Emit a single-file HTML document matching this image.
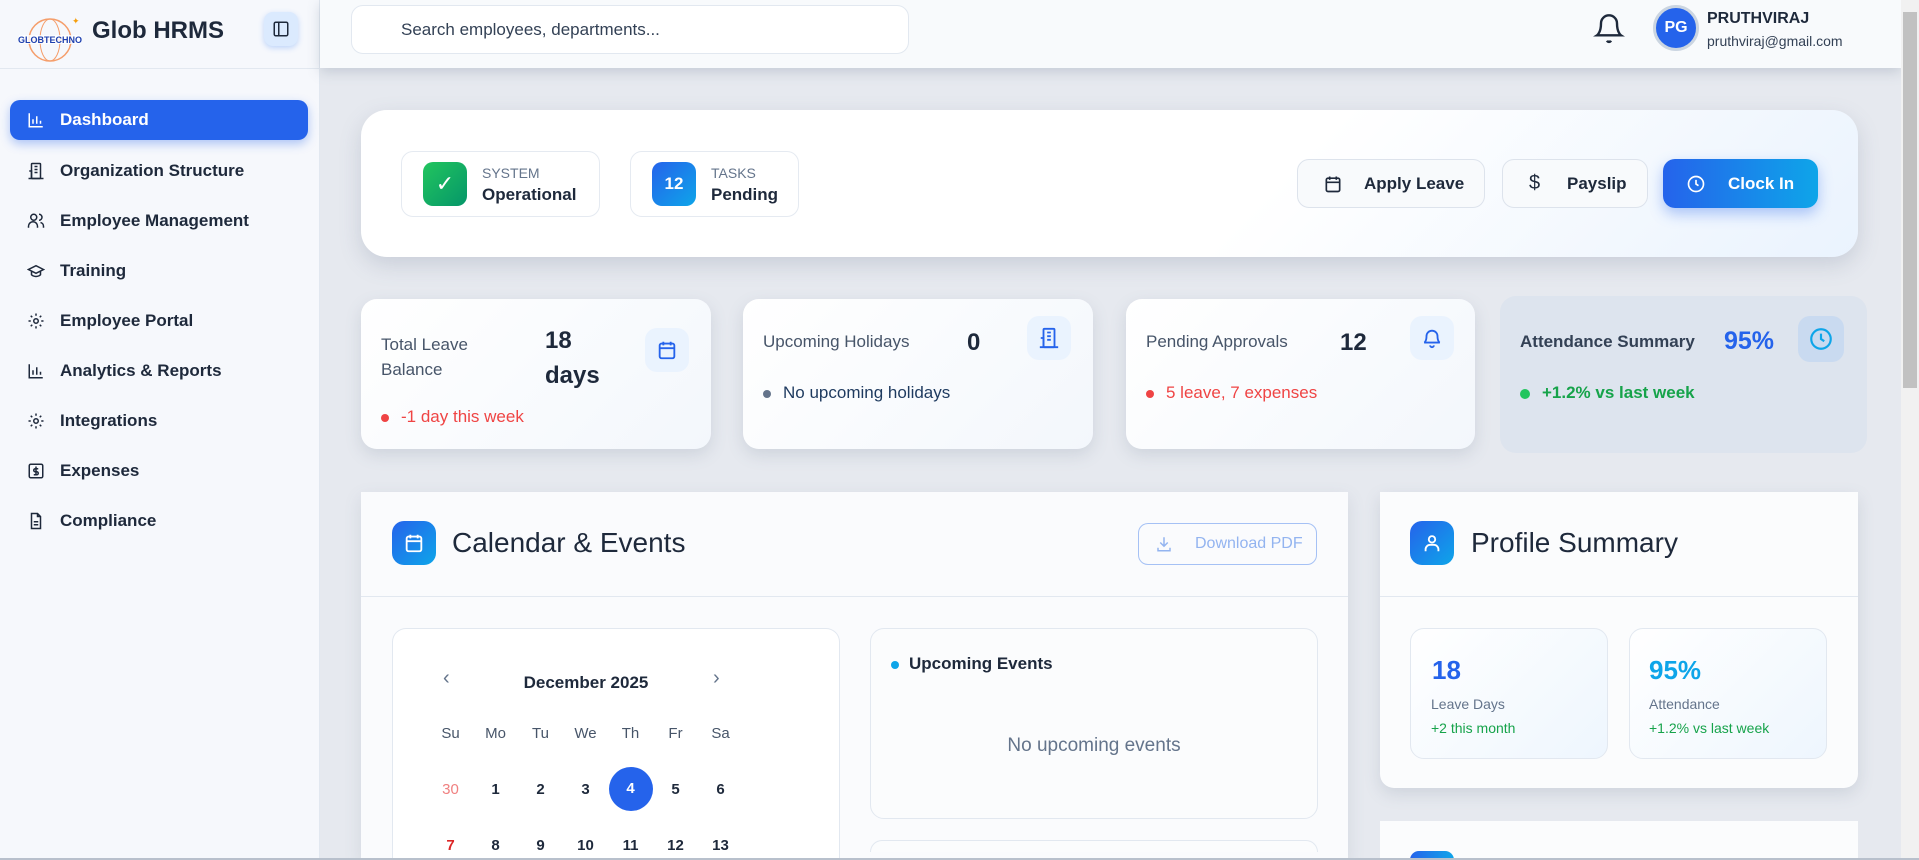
<!DOCTYPE html>
<html><head><meta charset="utf-8">
<style>
*{box-sizing:border-box;margin:0;padding:0}
html,body{width:1919px;height:860px;overflow:hidden}
body{font-family:"Liberation Sans",sans-serif;background:#e6e9ef;color:#1e293b}
#w{position:relative;width:1919px;height:860px;overflow:hidden;background:#e6e9ef}
.a{position:absolute}
.side{left:0;top:0;width:320px;height:860px;background:#f6f8fc;border-right:1px solid #e2e8f0}
.nav{position:absolute;left:10px;width:298px;height:40px;display:flex;align-items:center;font-size:17px;color:#1e293b;font-weight:600}
.nav svg{position:absolute;left:17px}
.nav span{position:absolute;left:50px}
.hdr{left:320px;top:0;width:1581px;height:68px;background:#f8fafc;box-shadow:0 4px 12px rgba(100,116,139,.25)}
.card{background:linear-gradient(135deg,#fff,#f3f7fc);border-radius:16px;box-shadow:0 6px 16px rgba(100,116,139,.18)}
.btn{position:absolute;top:159px;height:49px;border:1px solid #dde3ec;border-radius:12px;background:#f8fafc;font-size:17px;font-weight:600;display:flex;align-items:center;color:#1e293b}
.chip{position:absolute;top:151px;height:66px;border:1px solid #e5eaf1;border-radius:12px;background:#fff}
.lbl{font-size:17px;color:#475569}
.dot{display:inline-block;width:8px;height:8px;border-radius:50%;margin-right:12px;vertical-align:middle}
.ib{position:absolute;width:44px;height:44px;border-radius:12px;background:#eaf3fe;display:flex;align-items:center;justify-content:center}
.cal td{width:45px;height:56px;text-align:center;font-size:15px;font-weight:600;color:#1e293b}
</style></head><body><div id="w">

<div class="a side">
  <svg class="a" style="left:17px;top:16px" width="66" height="48" viewBox="0 0 66 48"><circle cx="33" cy="24" r="21" fill="none" stroke="#f59e6b" stroke-width="1.5"/><ellipse cx="33" cy="24" rx="10" ry="21" fill="none" stroke="#f59e6b"/><line x1="12" y1="24" x2="54" y2="24" stroke="#f59e6b"/><rect x="2" y="19" width="62" height="9" fill="#fff" opacity=".8"/><text x="33" y="27" font-size="9" font-weight="700" fill="#1e40af" text-anchor="middle" font-family="Liberation Sans">GLOBTECHNO</text><text x="55" y="8" font-size="9" fill="#f59e0b">✦</text></svg>
  <div class="a" style="left:92px;top:17px;font-size:24px;font-weight:700;color:#1e293b">Glob HRMS</div>
  <div class="a" style="left:264px;top:12px;width:34px;height:34px;border-radius:9px;background:#dbeafe;box-shadow:0 2px 6px rgba(59,130,246,.3);display:flex;align-items:center;justify-content:center"><svg width="18" height="18" viewBox="0 0 24 24" fill="none" stroke="#1e293b" stroke-width="2"><rect x="3" y="3" width="18" height="18" rx="2"/><line x1="9" y1="3" x2="9" y2="21"/></svg></div>
  <div class="a" style="left:0;top:68px;width:320px;height:1px;background:#e2e8f0"></div>

  <div class="nav" style="top:100px;background:#2563eb;color:#fff;border-radius:10px;box-shadow:0 4px 10px rgba(37,99,235,.35)"><svg width="18" height="18" viewBox="0 0 24 24" fill="none" stroke="#fff" stroke-width="2"><path d="M3 3v18h18M8 17V11M13 17V7M18 17v-4"/></svg><span>Dashboard</span></div>
  <div class="nav" style="top:151px"><svg width="18" height="18" viewBox="0 0 24 24" fill="none" stroke="#1e293b" stroke-width="2"><rect x="6" y="2" width="12" height="20" rx="1"/><path d="M2 22h20M10 6h4M10 10h4M10 14h4M3 12h3v10"/></svg><span>Organization Structure</span></div>
  <div class="nav" style="top:201px"><svg width="18" height="18" viewBox="0 0 24 24" fill="none" stroke="#1e293b" stroke-width="2"><circle cx="9" cy="7" r="4"/><path d="M2 21v-2a6 6 0 0 1 12 0v2M16 3a4 4 0 0 1 0 8M22 21v-2a5 5 0 0 0-4-5"/></svg><span>Employee Management</span></div>
  <div class="nav" style="top:251px"><svg width="18" height="18" viewBox="0 0 24 24" fill="none" stroke="#1e293b" stroke-width="2"><path d="M22 10 12 5 2 10l10 5 10-5zM6 12v5c3 3 9 3 12 0v-5"/></svg><span>Training</span></div>
  <div class="nav" style="top:301px"><svg width="18" height="18" viewBox="0 0 24 24" fill="none" stroke="#1e293b" stroke-width="2"><circle cx="12" cy="12" r="3"/><path d="M12 2v3M12 19v3M2 12h3M19 12h3M5 5l2 2M17 17l2 2M5 19l2-2M17 7l2-2"/></svg><span>Employee Portal</span></div>
  <div class="nav" style="top:351px"><svg width="18" height="18" viewBox="0 0 24 24" fill="none" stroke="#1e293b" stroke-width="2"><path d="M3 3v18h18M8 17V11M13 17V7M18 17v-4"/></svg><span>Analytics &amp; Reports</span></div>
  <div class="nav" style="top:401px"><svg width="18" height="18" viewBox="0 0 24 24" fill="none" stroke="#1e293b" stroke-width="2"><circle cx="12" cy="12" r="3"/><path d="M12 2v3M12 19v3M2 12h3M19 12h3M5 5l2 2M17 17l2 2M5 19l2-2M17 7l2-2"/></svg><span>Integrations</span></div>
  <div class="nav" style="top:451px"><svg width="18" height="18" viewBox="0 0 24 24" fill="none" stroke="#1e293b" stroke-width="2"><rect x="3" y="3" width="18" height="18" rx="2"/><path d="M12 6v12M15 9h-4a2 2 0 0 0 0 4h2a2 2 0 0 1 0 4H9"/></svg><span>Expenses</span></div>
  <div class="nav" style="top:501px"><svg width="18" height="18" viewBox="0 0 24 24" fill="none" stroke="#1e293b" stroke-width="2"><path d="M14 2H6v20h12V6zM14 2v4h4M9 13h6M9 17h6"/></svg><span>Compliance</span></div>
</div>

<div class="a hdr">
  <div class="a" style="left:31px;top:5px;width:558px;height:49px;background:#fff;border:1px solid #e2e8f0;border-radius:12px"></div>
  <div class="a" style="left:81px;top:20px;font-size:17px;color:#334155">Search employees, departments...</div>
  <svg class="a" style="left:1273px;top:10px" width="32" height="36" viewBox="0 0 24 27" fill="none" stroke="#1e293b" stroke-width="1.8"><path d="M6 10a6 6 0 0 1 12 0c0 7 3 9 3 9H3s3-2 3-9M10.5 23a1.7 1.7 0 0 0 3 0"/></svg>
  <div class="a" style="left:1333px;top:5px;width:46px;height:46px;border-radius:50%;background:#2563eb;border:3px solid #cbd5e1;color:#fff;font-weight:700;font-size:16px;display:flex;align-items:center;justify-content:center">PG</div>
  <div class="a" style="left:1387px;top:10px;font-size:16px;font-weight:700;color:#1e293b">PRUTHVIRAJ</div>
  <div class="a" style="left:1387px;top:33px;font-size:14px;color:#334155">pruthviraj@gmail.com</div>
</div>

<div class="a" style="left:361px;top:110px;width:1497px;height:147px;border-radius:26px;background:linear-gradient(135deg,#fff 60%,#eaf3fe);box-shadow:0 8px 22px rgba(100,116,139,.22)"></div>
<div class="chip" style="left:401px;width:199px"><div class="a" style="left:21px;top:10px;width:44px;height:44px;border-radius:10px;background:linear-gradient(135deg,#22c55e,#059669);color:#fff;font-size:22px;display:flex;align-items:center;justify-content:center">✓</div><div class="a" style="left:80px;top:13px;font-size:14px;color:#64748b">SYSTEM</div><div class="a" style="left:80px;top:33px;font-size:17px;font-weight:700">Operational</div></div>
<div class="chip" style="left:630px;width:169px"><div class="a" style="left:21px;top:10px;width:44px;height:44px;border-radius:10px;background:linear-gradient(135deg,#2563eb,#0ea5e9);color:#fff;font-size:17px;font-weight:700;display:flex;align-items:center;justify-content:center">12</div><div class="a" style="left:80px;top:13px;font-size:14px;color:#64748b">TASKS</div><div class="a" style="left:80px;top:33px;font-size:17px;font-weight:700">Pending</div></div>
<div class="btn" style="left:1297px;width:188px"><svg class="a" style="left:25px" width="20" height="20" viewBox="0 0 24 24" fill="none" stroke="#1e293b" stroke-width="2"><rect x="4" y="5" width="16" height="16" rx="2"/><path d="M4 10h16M8 3v4M16 3v4"/></svg><span class="a" style="left:66px">Apply Leave</span></div>
<div class="btn" style="left:1502px;width:146px"><span class="a" style="left:26px;font-size:20px;font-weight:400">$</span><span class="a" style="left:64px">Payslip</span></div>
<div class="btn" style="left:1663px;width:155px;background:linear-gradient(90deg,#2563eb,#0ea5e9);color:#fff;border:none;box-shadow:0 6px 14px rgba(37,99,235,.35)"><svg class="a" style="left:23px" width="20" height="20" viewBox="0 0 24 24" fill="none" stroke="#fff" stroke-width="2"><circle cx="12" cy="12" r="9"/><path d="M12 7v5l3 2"/></svg><span class="a" style="left:65px">Clock In</span></div>

<div class="a card" style="left:361px;top:299px;width:350px;height:150px">
  <div class="a lbl" style="left:20px;top:33px;line-height:25px">Total Leave<br>Balance</div>
  <div class="a" style="left:184px;top:24px;font-size:24px;font-weight:700;line-height:35px">18<br>days</div>
  <div class="ib" style="left:284px;top:29px"><svg width="22" height="22" viewBox="0 0 24 24" fill="none" stroke="#2563eb" stroke-width="2"><rect x="4" y="5" width="16" height="16" rx="2"/><path d="M4 10h16M8 3v4M16 3v4"/></svg></div>
  <div class="a" style="left:20px;top:108px;font-size:17px;color:#ef4444"><span class="dot" style="background:#ef4444"></span>-1 day this week</div>
</div>
<div class="a card" style="left:743px;top:299px;width:350px;height:150px">
  <div class="a lbl" style="left:20px;top:33px">Upcoming Holidays</div>
  <div class="a" style="left:224px;top:30px;font-size:24px;font-weight:700">0</div>
  <div class="ib" style="left:284px;top:17px"><svg width="22" height="22" viewBox="0 0 24 24" fill="none" stroke="#2563eb" stroke-width="2"><rect x="6" y="2" width="12" height="20" rx="1"/><path d="M2 22h20M10 6h4M10 10h4M10 14h4M3 12h3v10"/></svg></div>
  <div class="a" style="left:20px;top:84px;font-size:17px;color:#1e3a5f"><span class="dot" style="background:#64748b"></span>No upcoming holidays</div>
</div>
<div class="a card" style="left:1126px;top:299px;width:349px;height:150px">
  <div class="a lbl" style="left:20px;top:33px">Pending Approvals</div>
  <div class="a" style="left:214px;top:30px;font-size:24px;font-weight:700">12</div>
  <div class="ib" style="left:284px;top:17px"><svg width="22" height="22" viewBox="0 0 24 24" fill="none" stroke="#2563eb" stroke-width="2"><path d="M6 10a6 6 0 0 1 12 0c0 6 2.5 7 2.5 7h-17S6 16 6 10M10 20a2 2 0 0 0 4 0"/></svg></div>
  <div class="a" style="left:20px;top:84px;font-size:17px;color:#ef4444"><span class="dot" style="background:#ef4444"></span>5 leave, 7 expenses</div>
</div>
<div class="a" style="left:1500px;top:296px;width:367px;height:157px;border-radius:16px;background:#dde4ee">
  <div class="a" style="left:20px;top:36px;font-size:17px;font-weight:700;color:#334155">Attendance Summary</div>
  <div class="a" style="left:224px;top:31px;font-size:25px;font-weight:700;color:#2563eb">95%</div>
  <div class="ib" style="left:298px;top:20px;width:46px;height:46px;background:#c9daf0"><svg width="26" height="26" viewBox="0 0 24 24" fill="none" stroke="#0ea5e9" stroke-width="2"><circle cx="12" cy="12" r="9"/><path d="M12 7v5l3 2"/></svg></div>
  <div class="a" style="left:20px;top:87px;font-size:17px;font-weight:600;color:#16a34a"><span class="dot" style="background:#22c55e;width:10px;height:10px"></span>+1.2% vs last week</div>
</div>

<div class="a" style="left:361px;top:492px;width:987px;height:368px;background:#fafbfd;box-shadow:0 6px 16px rgba(100,116,139,.15);overflow:hidden">
  <div class="a" style="left:0;top:104px;width:987px;height:1px;background:#e2e8f0"></div>
  <div class="a" style="left:31px;top:29px;width:44px;height:44px;border-radius:12px;background:linear-gradient(135deg,#2563eb,#0ea5e9);display:flex;align-items:center;justify-content:center"><svg width="22" height="22" viewBox="0 0 24 24" fill="none" stroke="#fff" stroke-width="2"><rect x="4" y="5" width="16" height="16" rx="2"/><path d="M4 10h16M8 3v4M16 3v4"/></svg></div>
  <div class="a" style="left:91px;top:35px;font-size:28px;color:#1e293b">Calendar &amp; Events</div>
  <div class="a" style="left:777px;top:31px;width:179px;height:42px;border:1px solid #a5c1f5;border-radius:10px;display:flex;align-items:center;color:#93b4f0;font-size:16px"><svg class="a" style="left:16px" width="18" height="18" viewBox="0 0 24 24" fill="none" stroke="#93b4f0" stroke-width="2"><path d="M12 3v12M7 10l5 5 5-5M4 17v4h16v-4"/></svg><span class="a" style="left:56px">Download PDF</span></div>
  <div class="a" style="left:31px;top:136px;width:448px;height:232px;border:1px solid #e2e8f0;border-bottom:none;border-radius:14px 14px 0 0;background:#fff">
    <div class="a" style="left:50px;top:38px;font-size:20px;color:#64748b">‹</div>
    <div class="a" style="left:320px;top:38px;font-size:20px;color:#64748b">›</div>
    <div class="a" style="left:0;width:386px;top:44px;text-align:center;font-size:17px;font-weight:600;color:#1e293b">December 2025</div>
    <table class="a cal" style="left:35px;top:76px;border-collapse:collapse">
      <tr><td style="height:44px;font-weight:400;color:#475569">Su</td><td style="font-weight:400;color:#475569">Mo</td><td style="font-weight:400;color:#475569">Tu</td><td style="font-weight:400;color:#475569">We</td><td style="font-weight:400;color:#475569">Th</td><td style="font-weight:400;color:#475569">Fr</td><td style="font-weight:400;color:#475569">Sa</td></tr>
      <tr><td style="color:#f08080;font-weight:400">30</td><td>1</td><td>2</td><td>3</td><td><div style="width:44px;height:44px;border-radius:50%;background:#2563eb;color:#fff;line-height:44px;margin:auto">4</div></td><td>5</td><td>6</td></tr>
      <tr><td style="color:#dc2626;height:52px">7</td><td>8</td><td>9</td><td>10</td><td>11</td><td>12</td><td>13</td></tr>
    </table>
  </div>
  <div class="a" style="left:509px;top:136px;width:448px;height:191px;border:1px solid #e2e8f0;border-radius:14px;background:#fbfcfd">
    <div class="a" style="left:20px;top:25px;font-size:17px;font-weight:600;color:#1e293b"><span class="dot" style="background:#0ea5e9;margin-right:10px"></span>Upcoming Events</div>
    <div class="a" style="left:0;width:446px;top:106px;text-align:center;font-size:19px;color:#64748b">No upcoming events</div>
  </div>
  <div class="a" style="left:509px;top:348px;width:448px;height:12px;border:1px solid #e2e8f0;border-bottom:none;border-radius:14px 14px 0 0;background:#fbfcfd"></div>
</div>

<div class="a" style="left:1380px;top:492px;width:478px;height:296px;background:#fbfcfd;border-radius:0 0 14px 14px;box-shadow:0 6px 16px rgba(100,116,139,.18)">
  <div class="a" style="left:0;top:104px;width:478px;height:1px;background:#e2e8f0"></div>
  <div class="a" style="left:30px;top:29px;width:44px;height:44px;border-radius:12px;background:linear-gradient(135deg,#2563eb,#0ea5e9);display:flex;align-items:center;justify-content:center"><svg width="22" height="22" viewBox="0 0 24 24" fill="none" stroke="#fff" stroke-width="2"><circle cx="12" cy="8" r="3.5"/><path d="M5 21v-2a5 5 0 0 1 5-5h4a5 5 0 0 1 5 5v2"/></svg></div>
  <div class="a" style="left:91px;top:35px;font-size:28px;color:#1e293b">Profile Summary</div>
  <div class="a" style="left:30px;top:136px;width:198px;height:131px;border:1px solid #e2e8f0;border-radius:14px;background:linear-gradient(135deg,#fff,#eef6fe)">
    <div class="a" style="left:21px;top:26px;font-size:26px;font-weight:700;color:#2563eb">18</div>
    <div class="a" style="left:20px;top:67px;font-size:14px;color:#64748b">Leave Days</div>
    <div class="a" style="left:20px;top:91px;font-size:14px;color:#16a34a">+2 this month</div>
  </div>
  <div class="a" style="left:249px;top:136px;width:198px;height:131px;border:1px solid #e2e8f0;border-radius:14px;background:linear-gradient(135deg,#fff,#eef6fe)">
    <div class="a" style="left:19px;top:26px;font-size:26px;font-weight:700;color:#0ea5e9">95%</div>
    <div class="a" style="left:19px;top:67px;font-size:14px;color:#64748b">Attendance</div>
    <div class="a" style="left:19px;top:91px;font-size:14px;color:#16a34a">+1.2% vs last week</div>
  </div>
</div>
<div class="a" style="left:1380px;top:821px;width:478px;height:39px;background:#fbfcfd">
  <div class="a" style="left:30px;top:30px;width:44px;height:9px;border-radius:12px 12px 0 0;background:linear-gradient(90deg,#2563eb,#0ea5e9)"></div>
</div>
<div class="a" style="left:1901px;top:0;width:18px;height:860px;background:#f1f1f1"></div>
<div class="a" style="left:1903px;top:12px;width:14px;height:376px;background:#c1c1c1"></div>
<div class="a" style="left:0;top:858px;width:1919px;height:2px;background:#b8c0cc"></div>
</div></body></html>
